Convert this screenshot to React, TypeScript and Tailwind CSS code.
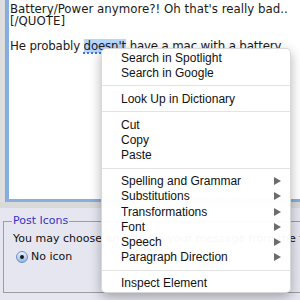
const menuGroups: { label: string; sub?: boolean }[][] = [
  [{ label: "Search in Spotlight" }, { label: "Search in Google" }],
  [{ label: "Look Up in Dictionary" }],
  [{ label: "Cut" }, { label: "Copy" }, { label: "Paste" }],
  [
    { label: "Spelling and Grammar", sub: true },
    { label: "Substitutions", sub: true },
    { label: "Transformations", sub: true },
    { label: "Font", sub: true },
    { label: "Speech", sub: true },
    { label: "Paragraph Direction", sub: true },
  ],
  [{ label: "Inspect Element" }],
]

function Arrow() {
  return (
    <svg width="7" height="8" viewBox="0 0 7 8" className="shrink-0">
      <path d="M0 0 L7 4 L0 8 Z" fill="#6b6b6b" />
    </svg>
  )
}

function ContextMenu() {
  return (
    <div className="absolute left-[101px] top-[48px] w-[190px] rounded-[5px] bg-white/[0.97] border border-black/15 shadow-[0_4px_12px_rgba(0,0,0,0.3)] py-[1px] font-['Liberation_Sans',Arial,sans-serif] text-[12px] text-[#111]">
      {menuGroups.map((group, gi) => (
        <div key={gi}>
          {gi > 0 && (
            <div className="h-[10.5px] flex items-center">
              <div className="h-[1px] w-full bg-[#e3e3e3]" />
            </div>
          )}
          {group.map((item) => (
            <div
              key={item.label}
              className="h-[15.3px] flex items-center justify-between pl-[19px] pr-[9px] leading-none"
            >
              <span>{item.label}</span>
              {item.sub && <Arrow />}
            </div>
          ))}
        </div>
      ))}
    </div>
  )
}

export default function App() {
  return (
    <div className="relative w-[300px] h-[300px] overflow-hidden bg-[#dcdcdc] font-['DejaVu_Sans',Verdana,sans-serif]">
      {/* editor area */}
      <div className="flex h-[202px]">
        <div className="w-[6px] shrink-0 border-r border-[#a3a3a3] bg-[#dedede]" />
        <div className="flex-1 border-l-[3px] border-b-[3px] border-[#86aede] bg-white pl-[1px] pt-[3px] text-[11.8px] leading-[12.4px] text-[#1a1a1a] whitespace-nowrap">
          <div>Battery/Power anymore?! Oh that's really bad..</div>
          <div>[/QUOTE]</div>
          <div>&nbsp;</div>
          <div className="tracking-[-0.15px]">
            He probably{" "}
            <span className="bg-[#b5d5fd] underline decoration-dotted decoration-[#3f73d6] decoration-2 underline-offset-2">
              doesn't
            </span>{" "}
            have a mac with a battery
          </div>
        </div>
      </div>
      <div className="h-[6px] bg-[#d9d9d9]" />

      {/* post icons panel */}
      <div className="h-[92px] bg-[#e6e6f1] pt-[5px] pl-[3px]">
        <fieldset className="h-[80px] border border-[#9d9d9d] pl-[8px] pr-0 text-[11px] text-[#111] whitespace-nowrap">
          <legend className="px-[1px] text-[#3434c4]">Post Icons</legend>
          <div className="mt-[1px] pl-[1px]">
            You may choose an icon for your message from the following list:
          </div>
          <div className="mt-[2px] flex items-center gap-[3px] pl-[4px]">
            <span className="flex h-[12px] w-[12px] items-center justify-center rounded-full border border-[#6f8fb8] bg-gradient-to-b from-[#e8f2fd] to-[#8fbbe8]">
              <span className="h-[4px] w-[4px] rounded-full bg-[#1b1b1b]" />
            </span>
            <span>No icon</span>
          </div>
        </fieldset>
      </div>

      <ContextMenu />
    </div>
  )
}
